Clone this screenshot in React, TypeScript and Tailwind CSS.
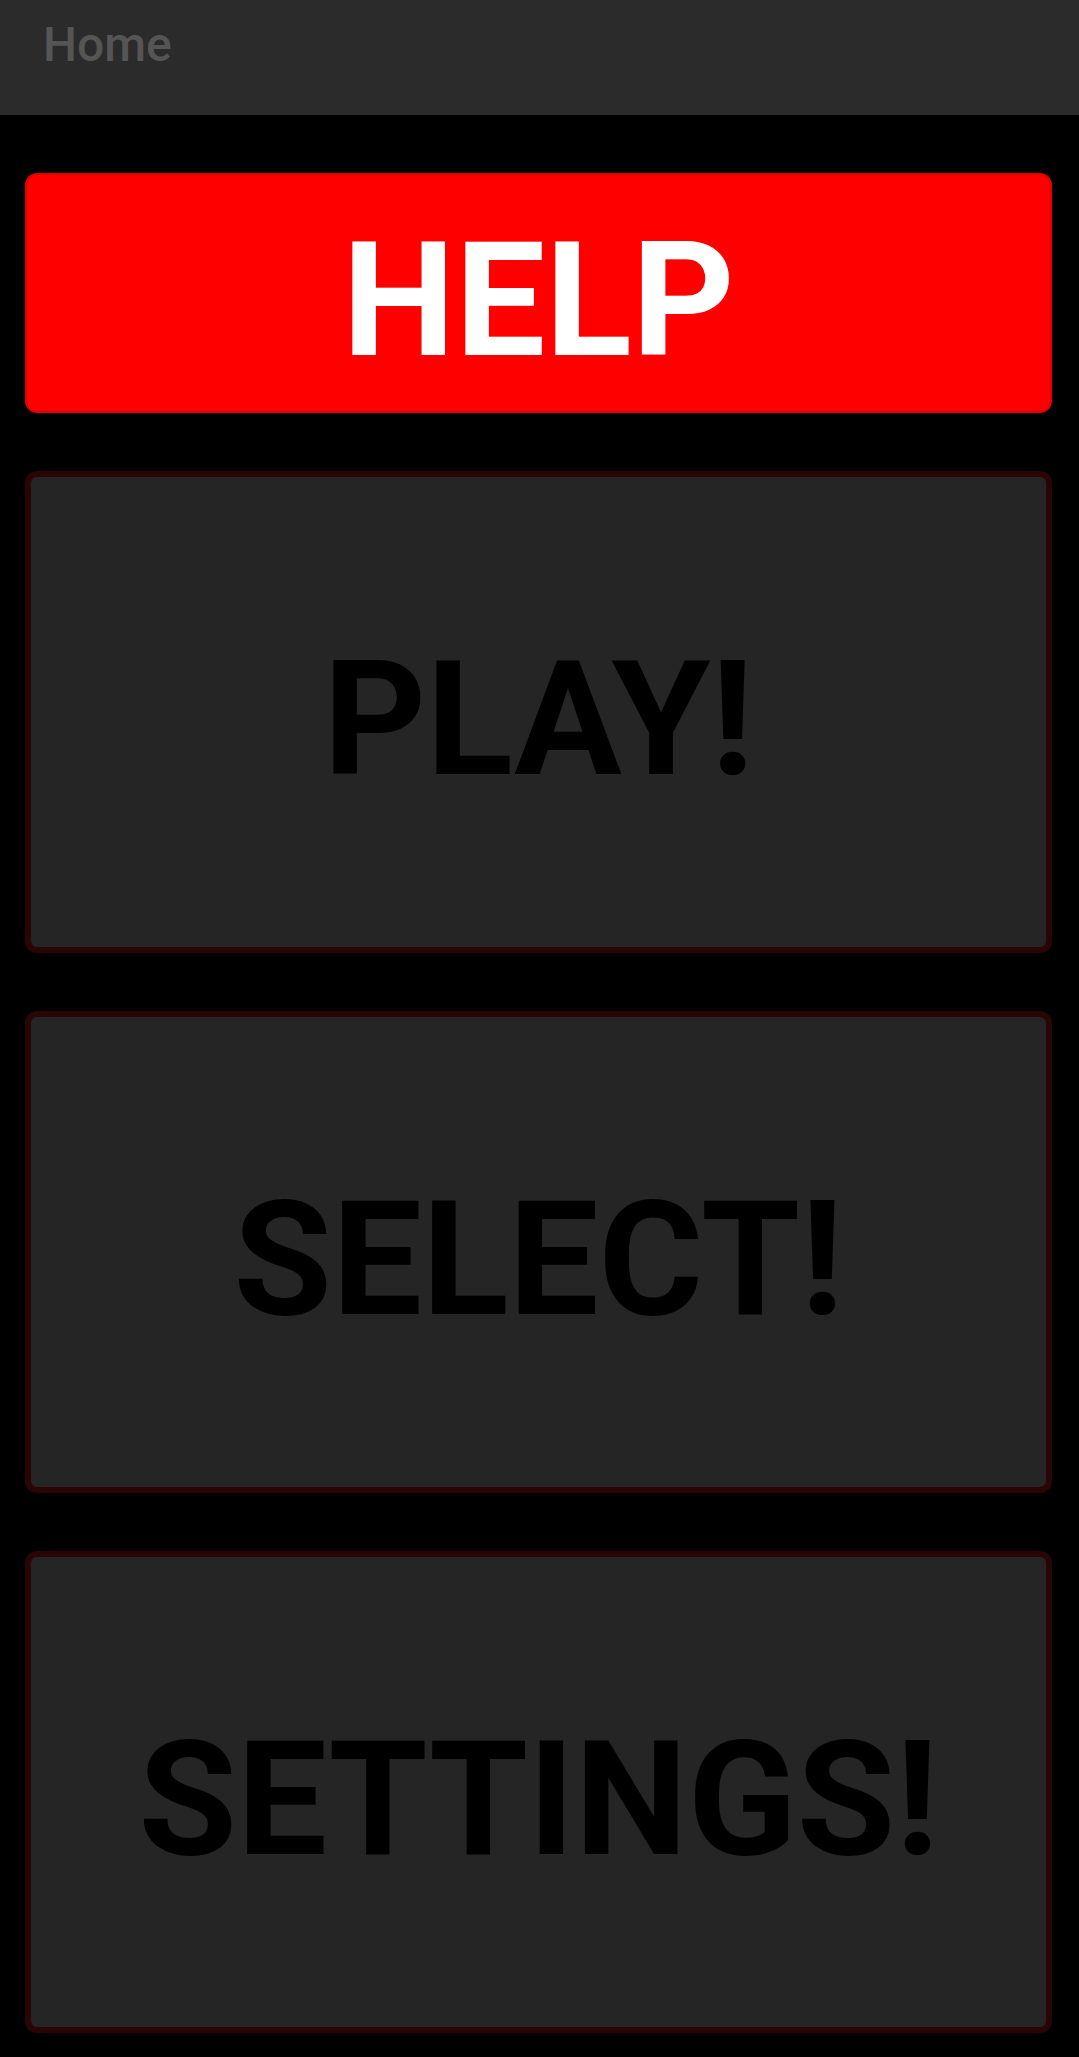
import React from "react";

const font = { fontFamily: "Roboto, 'Liberation Sans', sans-serif" };

function Box({ label }: { label: string }) {
  return (
    <div className="flex h-[482px] items-center justify-center rounded-[12px] border-[6px] border-[#2a0505] bg-[#252525] pt-[16px]">
      <span className="text-[160px] font-bold leading-none text-black">{label}</span>
    </div>
  );
}

export default function App() {
  return (
    <div className="min-h-[2057px] w-full bg-black" style={font}>
      <div className="flex h-[115px] items-start bg-[#2b2b2b] pl-[43px] pt-[19px]">
        <span className="text-[48px] font-medium leading-[52px] text-[#555555]">Home</span>
      </div>
      <div className="flex flex-col gap-[58px] pl-[25px] pr-[27px] pt-[58px]">
        <div className="flex h-[240px] items-center justify-center rounded-[12px] border-2 border-[#e00000] bg-[#ff0000] pt-[16px]">
          <span className="text-[160px] font-bold leading-none text-white">HELP</span>
        </div>
        <Box label="PLAY!" />
        <Box label="SELECT!" />
        <Box label="SETTINGS!" />
      </div>
    </div>
  );
}
